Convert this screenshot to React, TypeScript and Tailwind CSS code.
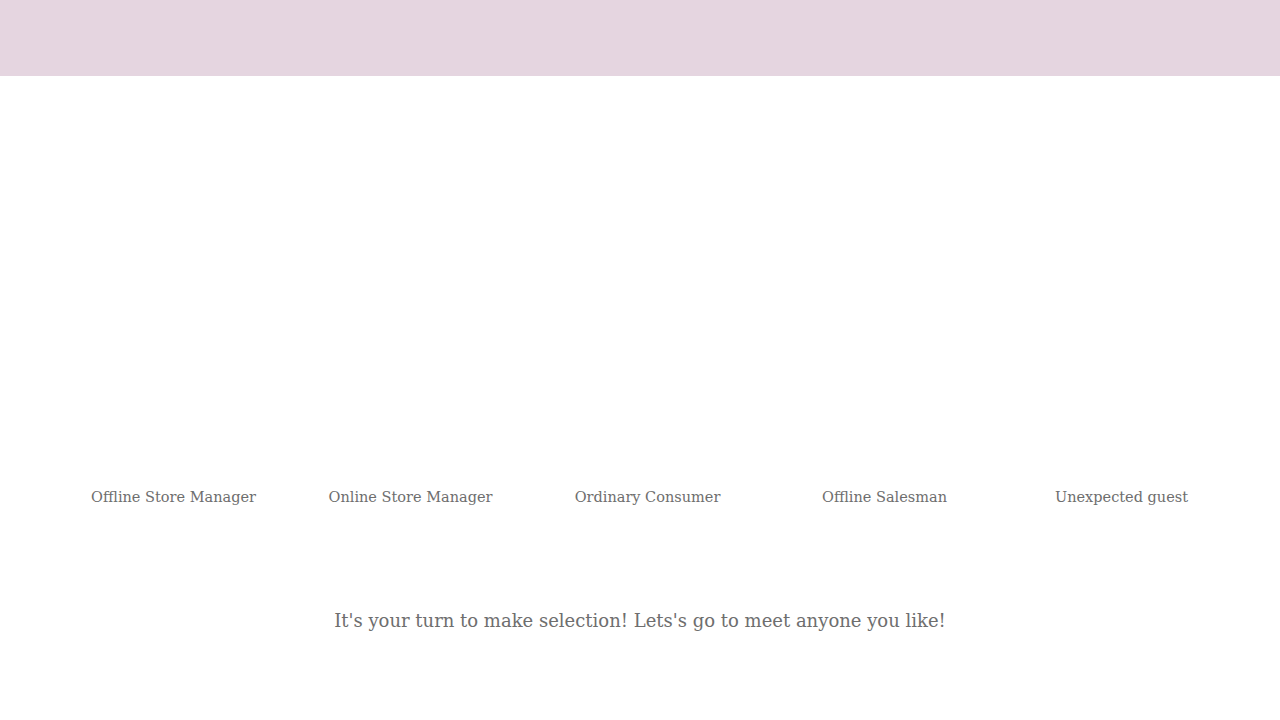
const roles = [
  "Offline Store Manager",
  "Online Store Manager",
  "Ordinary Consumer",
  "Offline Salesman",
  "Unexpected guest",
];

export default function App() {
  return (
    <div className="min-h-[720px] w-full bg-white font-['DejaVu_Serif',serif] text-[#6e6e6e]">
      <div className="h-[76px] w-full bg-[#e5d5e0]" />
      <div className="flex pl-[55px] pr-[40px] pt-[408px]">
        {roles.map((role) => (
          <div key={role} className="w-[237px] text-center text-[14.5px] leading-[26px]">
            {role}
          </div>
        ))}
      </div>
      <p className="mt-[96px] text-center text-[18px] leading-[30px]">
        It's your turn to make selection! Lets's go to meet anyone you like!
      </p>
    </div>
  );
}
